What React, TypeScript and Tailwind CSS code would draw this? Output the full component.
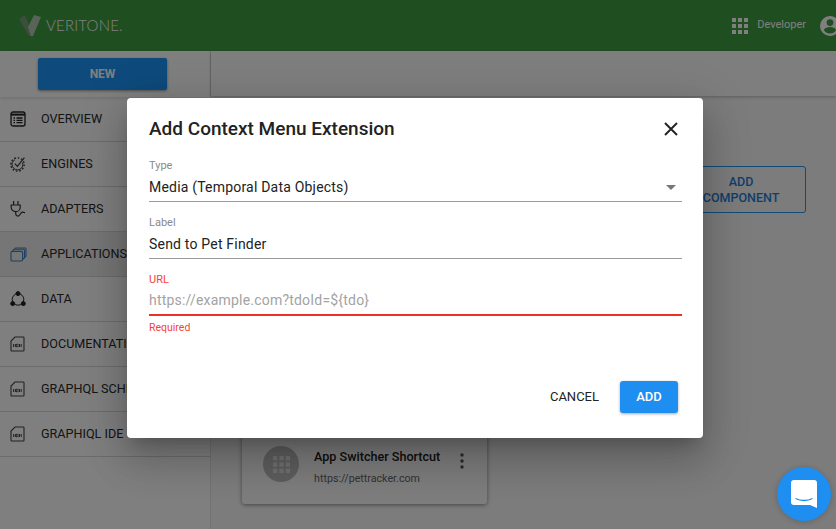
import type { ReactNode } from "react";

const roboto = "font-['Roboto',_sans-serif]";

function OverviewIcon() {
  return (
    <svg width="16" height="16" viewBox="0 0 16 16" fill="none" stroke="#222" strokeWidth="1.3">
      <rect x="1" y="1" width="14" height="14" rx="2" />
      <path d="M1 3.6h14" strokeWidth="2" />
      <path d="M3.5 7h1.5M3.5 9.3h1.5M3.5 11.6h1.5M6.5 7h6M6.5 9.3h6M6.5 11.6h6" />
    </svg>
  );
}

function EnginesIcon() {
  return (
    <svg width="16" height="16" viewBox="0 0 16 16" fill="none" stroke="#333">
      <circle cx="7.5" cy="8.5" r="5.4" strokeWidth="0.9" strokeDasharray="24 10" transform="rotate(-20 7.5 8.5)" />
      <circle cx="7.5" cy="8.5" r="6.7" strokeWidth="1.3" strokeDasharray="1.7 1.8" />
      <path d="M4.8 7.6 7.4 10.4 14.4 1.6" strokeWidth="1.2" />
    </svg>
  );
}

function AdaptersIcon() {
  return (
    <svg width="17" height="18" viewBox="0 0 17 18" fill="none" stroke="#333" strokeWidth="1.2">
      <path d="M3.6 1v4M8 1v4" />
      <path d="M1.2 5h9v2.2a4.5 4.5 0 0 1-9 0Z" />
      <path d="M5.7 11.6v2.2c0 1.8 2 2.8 3.4 1.8 1.3-1 1.6-3.2 3.2-3.4 1-.1 1.8.4 2.7.4" />
    </svg>
  );
}

function ApplicationsIcon() {
  return (
    <svg width="17" height="15" viewBox="0 0 17 15" fill="none" stroke="#3d7fc0" strokeWidth="1.1">
      <rect x="1" y="4.4" width="11.6" height="9.6" rx="1.2" />
      <path d="M3 4.2V3.4c0-.7.5-1.2 1.2-1.2h9.2c.7 0 1.1.5 1.1 1.2v7c0 .7-.4 1.2-1.1 1.2h-.8" />
      <path d="M5 2V1.7C5 1.3 5.4 1 5.8 1h9.3c.5 0 .9.4.9.9v7.2c0 .5-.4.9-.9.9h-.6" />
    </svg>
  );
}

function DataIcon() {
  return (
    <svg width="16" height="16" viewBox="0 0 16 16" fill="none" stroke="#222" strokeWidth="1">
      <circle cx="8" cy="8.4" r="5.8" />
      <circle cx="8" cy="2.6" r="2" fill="#222" />
      <circle cx="2.7" cy="12.6" r="2" fill="#222" />
      <circle cx="13.3" cy="12.6" r="2" fill="#222" />
    </svg>
  );
}

function BinaryDocIcon() {
  return (
    <svg width="15" height="16" viewBox="0 0 15 16" fill="none" stroke="#444" strokeWidth="1.1">
      <path d="M5 1h8.2c.5 0 .8.3.8.8v12.4c0 .5-.3.8-.8.8H1.8c-.5 0-.8-.3-.8-.8V5Z" />
      <path d="M3.6 8v3M5.4 8v3M9.5 8v3M11.2 8v3" strokeWidth="1" />
      <rect x="6.6" y="8.2" width="1.5" height="2.6" strokeWidth=".7" />
    </svg>
  );
}

function GridDots({ fill, size }: { fill: string; size: number }) {
  const spots = [0, 6, 12];
  return (
    <svg width={size} height={size} viewBox="0 0 16 16" fill={fill}>
      {spots.map((y) =>
        spots.map((x) => <rect key={`${x}-${y}`} x={x} y={y} width="4" height="4" />),
      )}
    </svg>
  );
}

const navItems: { label: string; icon: ReactNode; active?: boolean }[] = [
  { label: "OVERVIEW", icon: <OverviewIcon /> },
  { label: "ENGINES", icon: <EnginesIcon /> },
  { label: "ADAPTERS", icon: <AdaptersIcon /> },
  { label: "APPLICATIONS", icon: <ApplicationsIcon />, active: true },
  { label: "DATA", icon: <DataIcon /> },
  { label: "DOCUMENTATION", icon: <BinaryDocIcon /> },
  { label: "GRAPHQL SCHEMA", icon: <BinaryDocIcon /> },
  { label: "GRAPHIQL IDE", icon: <BinaryDocIcon /> },
];

function Header() {
  return (
    <header className="flex h-[51px] shrink-0 items-center justify-between bg-[#3f9c41] pl-[19px]">
      <div className="flex items-center gap-[5px]">
        <svg width="22" height="21" viewBox="0 0 22 21">
          <path d="M0 4 6 0l8 21h-4Z" fill="#7c9a7d" />
          <path d="M22 2 15 0 9 12l3 9h2Z" fill="#c5d0c5" opacity="0.85" />
        </svg>
        <span className="font-['Lato',_sans-serif] text-[15px] font-light tracking-[0.2px] text-white">
          VERITONE.
        </span>
      </div>
      <div className="flex items-center">
        <GridDots fill="#ffffff" size={16} />
        <span className={`${roboto} ml-[9px] text-[11px] text-white`}>Developer</span>
        <svg className="ml-[12px] mr-[-6px] shrink-0" width="24" height="24" viewBox="0 0 24 24" fill="#ffffff">
          <path d="M12 2a10 10 0 1 0 0 20 10 10 0 0 0 0-20Zm0 3.2a3.4 3.4 0 1 1 0 6.8 3.4 3.4 0 0 1 0-6.8Zm0 14.2a7.3 7.3 0 0 1-6-3.2c0-2 4-3.1 6-3.1s6 1.1 6 3.1a7.3 7.3 0 0 1-6 3.2Z" />
        </svg>
      </div>
    </header>
  );
}

function Sidebar() {
  return (
    <aside className="flex w-[211px] shrink-0 flex-col border-r border-[#e4e4e4] bg-[#ffffff]">
      <div className="flex h-[46px] shrink-0 items-start justify-start pl-[38px] pt-[7px] shadow-[0_2px_3px_rgba(0,0,0,0.1)]">
        <button className={`${roboto} h-[32px] w-[129px] rounded-[2px] bg-[#1c94f8] text-[12px] font-bold text-white shadow-[0_1px_3px_rgba(0,0,0,0.4)]`}>
          NEW
        </button>
      </div>
      {navItems.map((item) => (
        <div
          key={item.label}
          className={`flex h-[45px] shrink-0 items-center border-b border-[#d8d8d8] ${item.active ? "bg-[#ececec]" : ""}`}
        >
          <div className="flex w-[41px] shrink-0 justify-start pl-[10px]">{item.icon}</div>
          <span className={`${roboto} whitespace-nowrap text-[12.6px] text-[#2a2a2a]`}>{item.label}</span>
        </div>
      ))}
    </aside>
  );
}

function Main() {
  return (
    <main className="flex min-w-0 flex-1 flex-col bg-[#f8f8f8]">
      <div className="h-[45px] shrink-0 bg-[#fdfdfd] shadow-[0_1px_3px_rgba(0,0,0,0.25)]" />
      <div className="flex justify-end pr-[30px] pt-[70px]">
        <button className={`${roboto} h-[47px] w-[130px] rounded-[3px] border border-[#2196f3] text-[12.5px] font-medium leading-[16px] text-[#1c7fd6]`}>
          ADD
          <br />
          COMPONENT
        </button>
      </div>
      <div className="ml-[31px] mt-[211px] flex h-[80px] w-[245px] items-center rounded-[3px] bg-[#fbfbfb] pl-[21px] shadow-[0_1px_4px_rgba(0,0,0,0.45)]">
        <div className="flex h-[36px] w-[36px] shrink-0 items-center justify-center rounded-full bg-[#bdbdbd]">
          <GridDots fill="#e2e2e2" size={17} />
        </div>
        <div className="ml-[15px] mt-[7px] flex min-w-0 flex-1 flex-col gap-[5px]">
          <span className={`${roboto} text-[12.6px] font-medium text-[#222]`}>App Switcher Shortcut</span>
          <span className={`${roboto} text-[10.7px] text-[#666]`}>https://pettracker.com</span>
        </div>
        <svg className="mr-[23px] mt-[-6px] shrink-0" width="4" height="16" viewBox="0 0 4 16" fill="#555">
          <circle cx="2" cy="2" r="1.7" />
          <circle cx="2" cy="8" r="1.7" />
          <circle cx="2" cy="14" r="1.7" />
        </svg>
      </div>
    </main>
  );
}

function Field({
  label,
  value,
  placeholder,
  error,
  caret,
  className,
}: {
  label: string;
  value?: string;
  placeholder?: string;
  error?: string;
  caret?: boolean;
  className?: string;
}) {
  return (
    <div className={`${roboto} ${className ?? ""}`}>
      <div className={`text-[11px] leading-[14px] ${error ? "text-[#f44336]" : "text-[#8a8a8a]"}`}>{label}</div>
      <div
        className={`flex items-center justify-between pb-[2px] ${error ? "mt-[2px] h-[27px] border-b-2 border-[#ee3125]" : "mt-[3px] h-[26px] border-b border-[#9b9b9b]"}`}
      >
        <span className={`text-[14px] tracking-[0.2px] ${value ? "text-[#222]" : "text-[#a3a3a3]"}`}>{value ?? placeholder}</span>
        {caret && <span className="mr-[6px] h-0 w-0 border-x-[5px] border-t-[5px] border-x-transparent border-t-[#777]" />}
      </div>
      {error && <div className="mt-[5px] text-[10.5px] leading-[13px] text-[#f44336]">{error}</div>}
    </div>
  );
}

function Dialog() {
  return (
    <div className="flex h-[340px] w-[576px] flex-col rounded-[4px] bg-white pl-[22px] pr-[21px] shadow-[0_11px_15px_-7px_rgba(0,0,0,0.2),0_24px_38px_3px_rgba(0,0,0,0.14),0_9px_46px_8px_rgba(0,0,0,0.12)]">
      <div className="flex h-[62px] shrink-0 items-center justify-between">
        <h2 className={`${roboto} text-[19px] font-medium text-[#222]`}>Add Context Menu Extension</h2>
        <svg className="mr-[4px]" width="14" height="14" viewBox="0 0 14 14" stroke="#222" strokeWidth="1.9">
          <path d="M1 1l12 12M13 1 1 13" />
        </svg>
      </div>
      <Field className="-mt-[1px]" label="Type" value="Media (Temporal Data Objects)" caret />
      <Field className="mt-[14px]" label="Label" value="Send to Pet Finder" />
      <Field className="mt-[14px]" label="URL" placeholder="https://example.com?tdoId=${tdo}" error="Required" />
      <div className="mt-auto flex items-center justify-end gap-[21px] pb-[25px] pr-[4px]">
        <button className={`${roboto} text-[13px] text-[#222]`}>CANCEL</button>
        <button className={`${roboto} h-[32px] w-[58px] rounded-[3px] bg-[#1f8ef1] text-[13px] font-medium text-white shadow-[0_1px_3px_rgba(0,0,0,0.35)]`}>
          ADD
        </button>
      </div>
    </div>
  );
}

export default function App() {
  return (
    <div className="relative flex h-[529px] w-[836px] flex-col overflow-hidden">
      <Header />
      <div className="flex min-h-0 flex-1">
        <Sidebar />
        <Main />
      </div>
      <div className="absolute inset-0 bg-black/50 pl-[127px] pt-[98px]">
        <Dialog />
      </div>
      <div className="absolute bottom-[8px] right-[5px] flex h-[54px] w-[54px] items-center justify-center rounded-full bg-[#1f8ef1] shadow-[0_1px_6px_rgba(0,0,0,0.2)]">
        <svg width="26" height="28" viewBox="0 0 26 28">
          <path d="M3 0h20a3 3 0 0 1 3 3v25l-7-3H3a3 3 0 0 1-3-3V3a3 3 0 0 1 3-3Z" fill="#fff" />
          <path d="M4.5 18.5c5 2.6 12 2.6 17 0" fill="none" stroke="#1f8ef1" strokeWidth="1.4" />
        </svg>
      </div>
    </div>
  );
}
